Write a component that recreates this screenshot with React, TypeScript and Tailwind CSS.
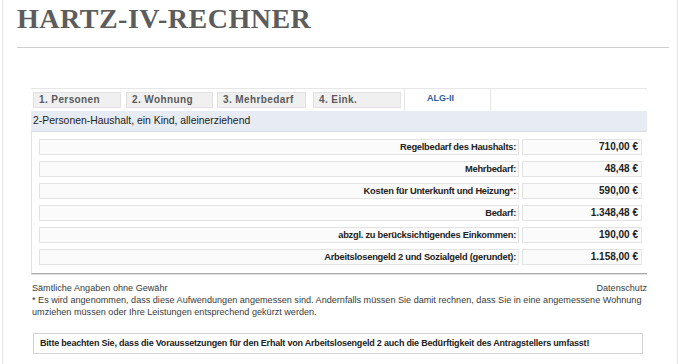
const tabs = [
  { label: '1. Personen', cls: 'ml-[2px] w-[88px]' },
  { label: '2. Wohnung', cls: 'ml-[5px] w-[87px]' },
  { label: '3. Mehrbedarf', cls: 'ml-[4px] w-[89px]' },
  { label: '4. Eink.', cls: 'ml-[7px] w-[88px]' },
];

const rows = [
  ['Regelbedarf des Haushalts:', '710,00 €'],
  ['Mehrbedarf:', '48,48 €'],
  ['Kosten für Unterkunft und Heizung*:', '590,00 €'],
  ['Bedarf:', '1.348,48 €'],
  ['abzgl. zu berücksichtigendes Einkommen:', '190,00 €'],
  ['Arbeitslosengeld 2 und Sozialgeld (gerundet):', '1.158,00 €'],
];

export default function App() {
  return (
    <div className="h-[364px] w-[684px] overflow-hidden bg-white font-['Liberation_Sans',Arial,sans-serif] text-[#333]">
      <div className="ml-[2px] h-full w-[676px] border-x border-[#e8e8e8] pl-[14px] pr-[8px]">
        <h1 className="pt-[3px] font-['Liberation_Serif',serif] text-[28px] font-bold leading-[32px] tracking-[0.5px] text-[#5c5c5c]">
          HARTZ-IV-RECHNER
        </h1>
        <div className="mt-[12px] border-t border-[#cfcfcf]" />

        <div className="ml-[14px] mt-[40px] w-[616px]">
          {/* tab bar */}
          <div className="flex h-[23px] border-t border-[#e6e6e6]">
            {tabs.map((t) => (
              <div
                key={t.label}
                className={`${t.cls} mt-[3px] h-[16px] border border-[#e2e2e2] bg-[#f0f0f0] pl-[5px] text-[10px] font-bold leading-[14px] tracking-[0.4px] text-[#5a5a5a]`}
              >
                {t.label}
              </div>
            ))}
            <div className="ml-[3px] h-full w-[87px] border-x border-[#e6e6e6] bg-white pl-[22px] pt-[3px] text-[9px] font-bold leading-[12px] text-[#2f5f9e]">
              ALG-II
            </div>
          </div>

          {/* headline */}
          <div className="h-[21px] border-b border-[#d6dae3] bg-[#e7ebf4] pl-[2px] text-[10.4px] leading-[20px] text-[#222]">
            2-Personen-Haushalt, ein Kind, alleinerziehend
          </div>

          {/* results */}
          <div className="flex flex-col gap-[6px] border-b border-l border-[#e2e2e2] border-b-[#ababab] pb-[8px] pl-[7px] pr-[5px] pt-[7px] shadow-[0_1px_0_#e0e0e0]">
            {rows.map(([label, value]) => (
              <div key={label} className="flex h-[16px] gap-[3px] font-bold leading-[14px] text-[#222]">
                <div className="flex-1 border border-[#e3e3e3] bg-[#fbfbfb] pr-[2px] text-right text-[9.3px] tracking-[-0.25px]">{label}</div>
                <div className="w-[120px] border border-[#e3e3e3] bg-[#fbfbfb] pr-[3px] text-right text-[10px]">{value}</div>
              </div>
            ))}
          </div>

          {/* notes */}
          <div className="mt-[8px] pl-[1px] text-[9.1px] leading-[12px] text-[#3a3a3a]">
            <div className="flex justify-between">
              <span>Sämtliche Angaben ohne Gewähr</span>
              <span>Datenschutz</span>
            </div>
            <p>
              * Es wird angenommen, dass diese Aufwendungen angemessen sind. Andernfalls müssen Sie damit rechnen, dass Sie in eine angemessene Wohnung umziehen müssen oder Ihre Leistungen entsprechend gekürzt werden.
            </p>
          </div>

          <div className="ml-[2px] mt-[15px] h-[21px] w-[610px] border border-[#d4d4d4] pl-[6px] text-[9px] font-bold leading-[19px] tracking-[-0.2px] text-[#222]">
            Bitte beachten Sie, dass die Voraussetzungen für den Erhalt von Arbeitslosengeld 2 auch die Bedürftigkeit des Antragstellers umfasst!
          </div>
        </div>
      </div>
    </div>
  );
}
